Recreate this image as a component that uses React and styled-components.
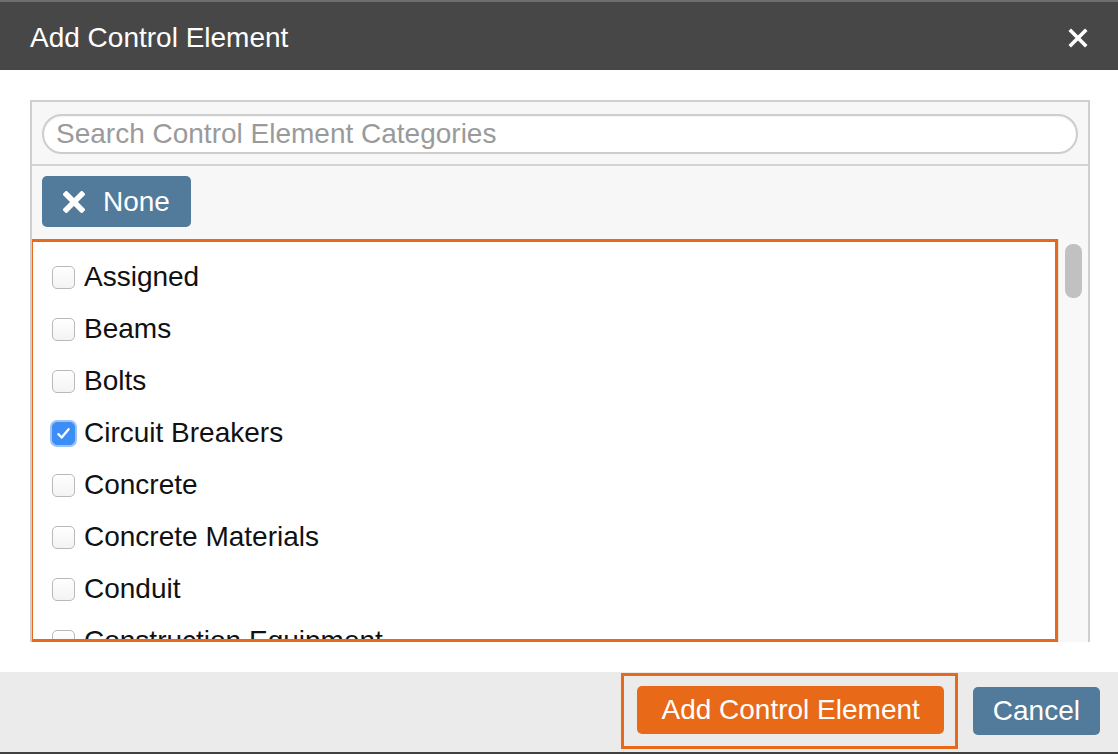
import { useState } from 'react';
import { styled, createGlobalStyle } from 'styled-components';

const GlobalStyle = createGlobalStyle`
  html, body {
    margin: 0;
    padding: 0;
    background: #ffffff;
    font-family: "Liberation Sans", Arial, Helvetica, sans-serif;
  }
  * { box-sizing: border-box; }
`;

const Modal = styled.div`
  width: 1118px;
  height: 754px;
  display: flex;
  flex-direction: column;
  background: #fff;
  overflow: hidden;
`;

const Header = styled.div`
  height: 70px;
  flex: none;
  display: flex;
  align-items: center;
  justify-content: space-between;
  padding: 3px 28px 0 30px;
  background: #474747;
  border-top: 2px solid #6e6e6e;
  color: #fff;
`;

const Title = styled.h2`
  margin: 0;
  font-size: 28px;
  font-weight: 400;
`;

const CloseButton = styled.button`
  width: 24px;
  height: 24px;
  padding: 0;
  border: 0;
  background: none;
  display: flex;
  align-items: center;
  justify-content: center;
  cursor: pointer;
`;

const Body = styled.div`
  flex: 1;
  min-height: 0;
  padding: 30px 28px 30px 30px;
`;

const Panel = styled.div`
  height: 100%;
  display: flex;
  flex-direction: column;
  background: #f7f7f7;
  border: 2px solid #cfcfcf;
  border-bottom: 0;
  overflow: hidden;
`;

const SearchRow = styled.div`
  flex: none;
  padding: 12px 10px 10px 10px;
  border-bottom: 2px solid #d4d4d4;
`;

const SearchInput = styled.input`
  display: block;
  width: 100%;
  height: 40px;
  border: 2px solid #cdcdcd;
  border-radius: 20px;
  background: #fff;
  padding: 0 12px;
  font-family: inherit;
  font-size: 28px;
  color: #333;
  outline: none;
  box-shadow: inset 0 1px 2px rgba(0, 0, 0, 0.05);
  &::placeholder { color: #9a9a9a; }
`;

const FilterRow = styled.div`
  flex: none;
  padding: 10px 10px 12px 10px;
`;

const Button = styled.button`
  display: inline-flex;
  align-items: center;
  justify-content: center;
  gap: 18px;
  height: ${(p) => p.$height || 48}px;
  padding: 0 ${(p) => p.$padX || 20}px;
  border: 0;
  border-radius: 5px;
  background: ${(p) => (p.$variant === 'primary' ? '#e86a19' : '#527a9a')};
  color: #fff;
  font-family: inherit;
  font-size: 28px;
  cursor: pointer;
`;

const ListArea = styled.div`
  flex: 1;
  min-height: 0;
  display: flex;
  margin-left: -2px;
`;

const ListBody = styled.div`
  flex: 1;
  min-height: 0;
  border: 3px solid #e86a19;
  background: #fff;
  overflow: hidden;
  padding-top: 9px;
`;

const Item = styled.label`
  height: 52px;
  display: flex;
  align-items: center;
  padding-left: 19px;
  font-size: 28px;
  color: #111;
  cursor: pointer;
  white-space: nowrap;
`;

const Box = styled.span`
  width: 23px;
  height: 23px;
  flex: none;
  margin-right: 9px;
  border-radius: 5px;
  display: flex;
  align-items: center;
  justify-content: center;
  background: ${(p) => (p.$checked ? '#3c8ef6' : 'linear-gradient(#fff, #f3f3f3)')};
  border: 1px solid ${(p) => (p.$checked ? '#3c8ef6' : '#b9b9b9')};
  box-shadow: ${(p) => (p.$checked ? '0 0 0 2px #9cc3f7' : 'none')};
`;

const ScrollTrack = styled.div`
  width: 30px;
  flex: none;
  background: #f8f8f8;
  border-left: 1px solid #e2e2e2;
  padding: 5px 6px 0 6px;
`;

const ScrollThumb = styled.div`
  height: 54px;
  border-radius: 8px;
  background: #c1c1c1;
`;

const Footer = styled.div`
  height: 82px;
  flex: none;
  display: flex;
  align-items: center;
  justify-content: flex-end;
  gap: 15px;
  padding: 0 18px 2px 0;
  background: #ebebeb;
  border-bottom: 2px solid #404040;
`;

const Highlight = styled.div`
  border: 3px solid #e86a19;
  padding: 10px 11px 12px 13px;
`;

const categories = [
  'Assigned',
  'Beams',
  'Bolts',
  'Circuit Breakers',
  'Concrete',
  'Concrete Materials',
  'Conduit',
  'Construction Equipment',
];

function Check() {
  return (
    <svg width="17" height="17" viewBox="0 0 16 16" fill="none">
      <path d="M3.2 8.6l3.1 3.2L12.8 4" stroke="#fff" strokeWidth="2.2" strokeLinecap="round" strokeLinejoin="round" />
    </svg>
  );
}

function Cross({ size, stroke }) {
  return (
    <svg width={size} height={size} viewBox="0 0 20 20">
      <path d="M3 3L17 17M17 3L3 17" stroke="#fff" strokeWidth={stroke} strokeLinecap="square" />
    </svg>
  );
}

export default function App() {
  const [checked, setChecked] = useState({ 'Circuit Breakers': true });

  function toggle(name) {
    setChecked((prev) => ({ ...prev, [name]: !prev[name] }));
  }

  return (
    <Modal>
      <GlobalStyle />
      <Header>
        <Title>Add Control Element</Title>
        <CloseButton aria-label="Close">
          <Cross size={20} stroke={3.6} />
        </CloseButton>
      </Header>
      <Body>
        <Panel>
          <SearchRow>
            <SearchInput placeholder="Search Control Element Categories" />
          </SearchRow>
          <FilterRow>
            <Button $height={51} $padX={21} onClick={() => setChecked({})}>
              <Cross size={22} stroke={5} />
              None
            </Button>
          </FilterRow>
          <ListArea>
            <ListBody>
              {categories.map((name) => (
                <Item key={name} onClick={() => toggle(name)}>
                  <Box $checked={!!checked[name]}>{checked[name] && <Check />}</Box>
                  {name}
                </Item>
              ))}
            </ListBody>
            <ScrollTrack>
              <ScrollThumb />
            </ScrollTrack>
          </ListArea>
        </Panel>
      </Body>
      <Footer>
        <Highlight>
          <Button $variant="primary" $padX={24}>Add Control Element</Button>
        </Highlight>
        <Button $padX={20}>Cancel</Button>
      </Footer>
    </Modal>
  );
}
